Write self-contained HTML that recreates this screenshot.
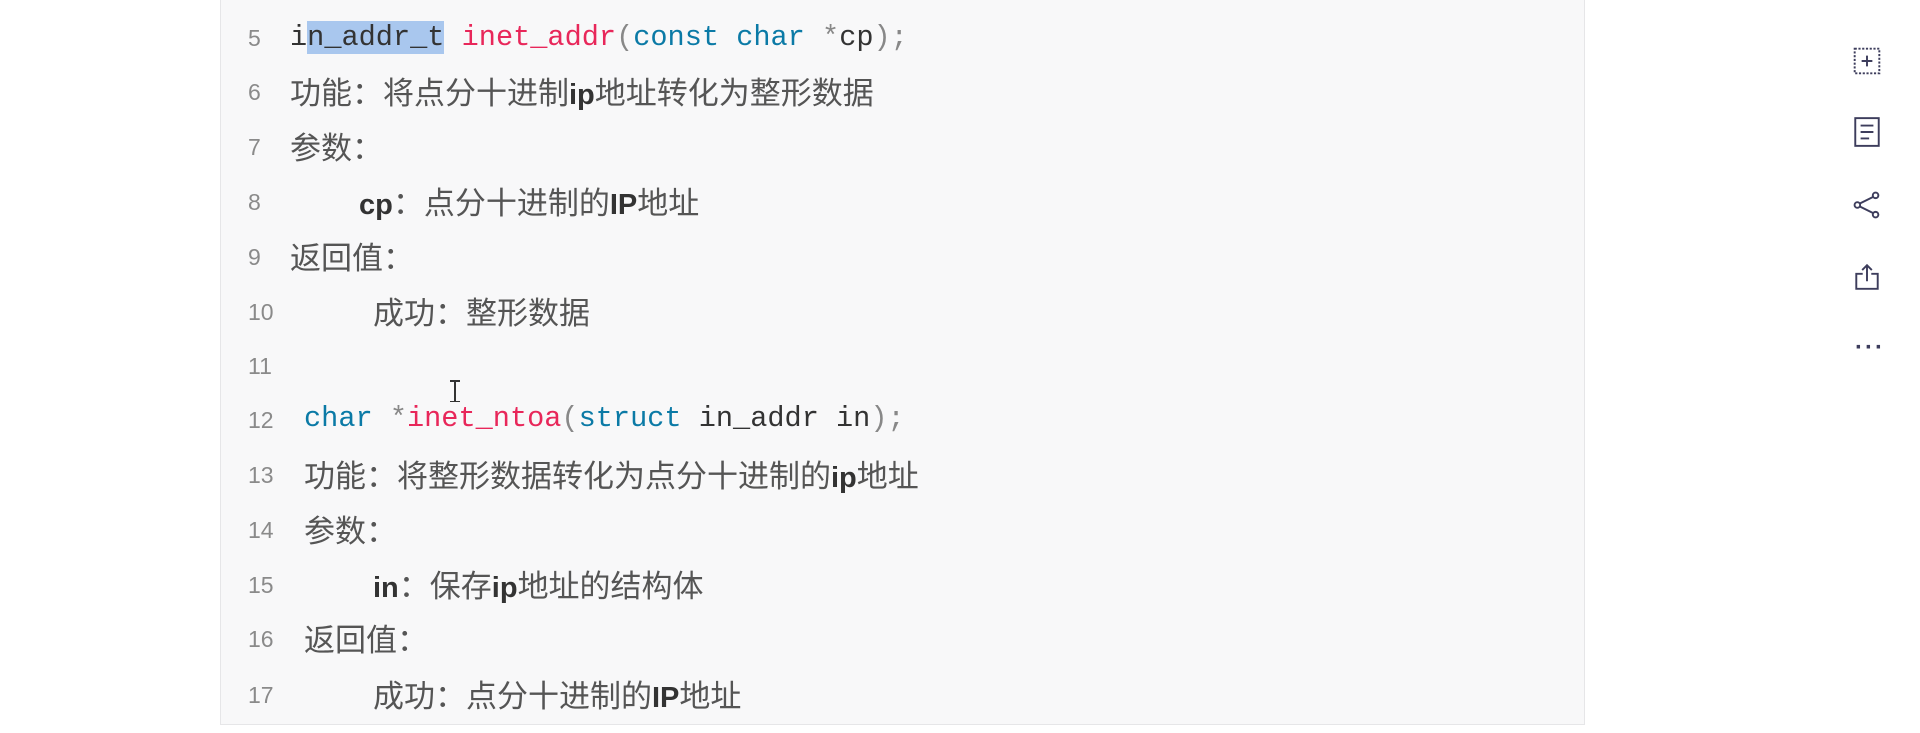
<!DOCTYPE html>
<html><head><meta charset="utf-8"><style>
html,body{margin:0;padding:0;width:1920px;height:733px;background:#fff;overflow:hidden;position:relative;font-family:"Liberation Mono","Noto Sans CJK SC",monospace;}
.block{position:absolute;left:220px;top:-5px;width:1363px;height:729px;background:#f8f8f9;border:1px solid #e6e6e8;border-top:none;}
.ln{position:absolute;left:248px;font-family:"Liberation Sans",sans-serif;font-size:23px;color:#8a8a8a;line-height:30px;}
.tx{position:absolute;font-size:28.6px;color:#555;line-height:34px;white-space:pre;}
.c{font-family:"Noto Sans CJK SC",sans-serif;font-size:31px;color:#555;}
.b{color:#333;font-weight:bold;font-family:"Liberation Sans",sans-serif;font-size:29px;}
.d{color:#333;}
.k{color:#0b7aa6;}
.f{color:#e8275a;}
.p{color:#888;}
.sel{background:#a9c7ee;}
.ic{position:absolute;left:1852px;}
</style></head><body>
<div class="block"></div>

<div class="ln" style="top:23px">5</div>
<div class="tx" style="left:290px;top:21px"><span class="d">i<span class="sel">n_addr_t</span></span> <span class="f">inet_addr</span><span class="p">(</span><span class="k">const</span> <span class="k">char</span> <span class="p">*</span><span class="d">cp</span><span class="p">);</span></div>

<div class="ln" style="top:77px">6</div>
<div class="tx" style="left:290px;top:74px"><span class="c">功能：将点分十进制</span><span class="b">ip</span><span class="c">地址转化为整形数据</span></div>

<div class="ln" style="top:132px">7</div>
<div class="tx" style="left:290px;top:129px"><span class="c">参数：</span></div>

<div class="ln" style="top:187px">8</div>
<div class="tx" style="left:359px;top:184px"><span class="b">cp</span><span class="c">：点分十进制的</span><span class="b">IP</span><span class="c">地址</span></div>

<div class="ln" style="top:242px">9</div>
<div class="tx" style="left:290px;top:239px"><span class="c">返回值：</span></div>

<div class="ln" style="top:297px">10</div>
<div class="tx" style="left:373px;top:294px"><span class="c">成功：整形数据</span></div>

<div class="ln" style="top:351px">11</div>

<div style="position:absolute;left:450px;top:380px;width:10px;height:22px;">
<div style="position:absolute;left:4px;top:0;width:1.5px;height:22px;background:#333"></div>
<div style="position:absolute;left:0;top:0;width:10px;height:1.5px;background:#333"></div>
<div style="position:absolute;left:0;bottom:0;width:10px;height:1.5px;background:#333"></div>
</div>

<div class="ln" style="top:405px">12</div>
<div class="tx" style="left:304px;top:402px"><span class="k">char</span> <span class="p">*</span><span class="f">inet_ntoa</span><span class="p">(</span><span class="k">struct</span> <span class="d">in_addr in</span><span class="p">);</span></div>

<div class="ln" style="top:460px">13</div>
<div class="tx" style="left:304px;top:457px"><span class="c">功能：将整形数据转化为点分十进制的</span><span class="b">ip</span><span class="c">地址</span></div>

<div class="ln" style="top:515px">14</div>
<div class="tx" style="left:304px;top:512px"><span class="c">参数：</span></div>

<div class="ln" style="top:570px">15</div>
<div class="tx" style="left:373px;top:567px"><span class="b">in</span><span class="c">：保存</span><span class="b">ip</span><span class="c">地址的结构体</span></div>

<div class="ln" style="top:624px">16</div>
<div class="tx" style="left:304px;top:621px"><span class="c">返回值：</span></div>

<div class="ln" style="top:680px">17</div>
<div class="tx" style="left:373px;top:677px"><span class="c">成功：点分十进制的</span><span class="b">IP</span><span class="c">地址</span></div>

<svg class="ic" style="top:46px" width="30" height="30" viewBox="0 0 28 28" fill="none" stroke="#3d3d5c" stroke-width="1.8"><rect x="2.5" y="2.5" width="23" height="23" stroke-dasharray="2 1.5"/><path d="M14 9v10M9 14h10"/></svg>
<svg class="ic" style="top:116px" width="30" height="32" viewBox="0 0 28 30" fill="none" stroke="#3d3d5c" stroke-width="1.8"><rect x="3" y="2" width="22" height="26"/><path d="M8 9h12M8 15h12M8 21h8"/></svg>
<svg class="ic" style="top:190px" width="30" height="30" viewBox="0 0 28 28" fill="none" stroke="#3d3d5c" stroke-width="1.8"><circle cx="22" cy="5" r="2.6"/><circle cx="5" cy="14" r="2.6"/><circle cx="22" cy="23" r="2.6"/><path d="M7.3 12.6L19.8 6.4M7.3 15.4L19.8 21.6"/></svg>
<svg class="ic" style="top:262px" width="30" height="30" viewBox="0 0 28 28" fill="none" stroke="#3d3d5c" stroke-width="1.8"><path d="M10 11H4v14h20V11h-6M14 3v15M9.5 7.5L14 3l4.5 4.5"/></svg>
<div style="position:absolute;left:1855px;top:334px;font-family:'Liberation Sans',sans-serif;font-size:24px;font-weight:bold;color:#3d3d5c;letter-spacing:2px">···</div>
</body></html>
